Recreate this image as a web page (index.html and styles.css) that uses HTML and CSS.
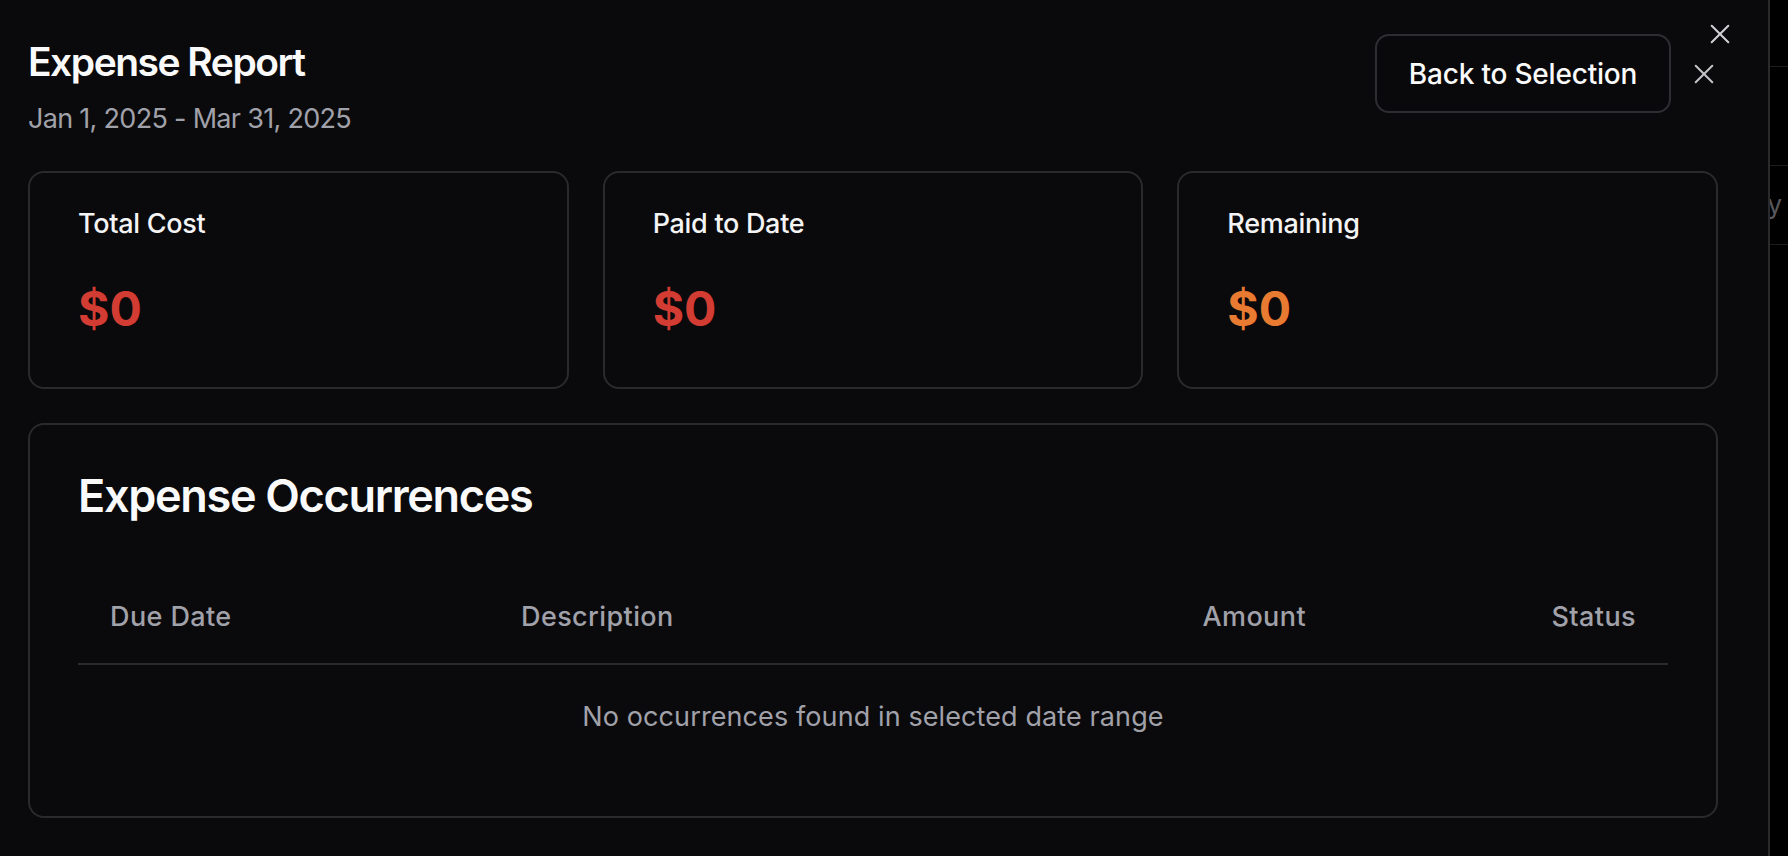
FILE: index.html
```html
<!DOCTYPE html>
<html lang="en">
<head>
<meta charset="utf-8">
<title>Expense Report</title>
<link rel="stylesheet" href="styles.css">
</head>
<body>
<div class="screen">
  <div class="modal">
    <button class="dialog-close" aria-label="Close dialog">
      <svg width="20" height="20" viewBox="0 0 20 20"><path d="M1.7 1.7 L18.3 18.3 M18.3 1.7 L1.7 18.3" fill="none" stroke="currentColor" stroke-width="2" stroke-linecap="round"/></svg>
    </button>
    <header class="modal-header">
      <div class="title-block">
        <h1 class="title">Expense Report</h1>
        <p class="subtitle">Jan 1, 2025 - Mar 31, 2025</p>
      </div>
      <div class="header-actions">
        <button class="btn-outline">Back to Selection</button>
        <button class="icon-btn" aria-label="Close">
          <svg width="20" height="20" viewBox="0 0 20 20"><path d="M1.7 1.7 L18.3 18.3 M18.3 1.7 L1.7 18.3" fill="none" stroke="currentColor" stroke-width="2" stroke-linecap="round"/></svg>
        </button>
      </div>
    </header>

    <section class="stats">
      <div class="stat-card">
        <p class="stat-label">Total Cost</p>
        <p class="stat-value red">$0</p>
      </div>
      <div class="stat-card">
        <p class="stat-label">Paid to Date</p>
        <p class="stat-value red">$0</p>
      </div>
      <div class="stat-card">
        <p class="stat-label">Remaining</p>
        <p class="stat-value orange">$0</p>
      </div>
    </section>

    <section class="occ-card">
      <h2 class="occ-title">Expense Occurrences</h2>
      <div class="table">
        <div class="thead">
          <div class="th">Due Date</div>
          <div class="th">Description</div>
          <div class="th right">Amount</div>
          <div class="th right">Status</div>
        </div>
        <div class="empty">No occurrences found in selected date range</div>
      </div>
    </section>
  </div>

  <div class="behind">
    <div class="behind-row r1"></div>
    <div class="behind-row r2"></div>
    <div class="behind-row r3"><span>Category</span></div>
    <div class="behind-row r4"></div>
  </div>
</div>
</body>
</html>
```

FILE: styles.css
```css
html, body {
  margin: 0;
  padding: 0;
  background: #000;
}

body {
  font-family: Inter, "Noto Sans", sans-serif;
  color: #fafafa;
}

.screen {
  display: flex;
  height: 856px;
  overflow: hidden;
}

.modal {
  position: relative;
  flex: none;
  width: 1770px;
  box-sizing: border-box;
  background: #0a0a0c;
  border-right: 2px solid #2a2a2d;
  padding: 34px 50px 0 28px;
}

.dialog-close {
  position: absolute;
  top: 24px;
  right: 38px;
  width: 20px;
  height: 20px;
  padding: 0;
  border: 0;
  background: none;
  color: #d2d2d6;
  display: flex;
}

.modal-header {
  display: flex;
  justify-content: space-between;
  align-items: flex-start;
}

.title {
  margin: 4px 0 0;
  font-size: 39px;
  line-height: 48px;
  font-weight: 600;
  letter-spacing: -1.5px;
  color: #fafafa;
}

.subtitle {
  margin: 13px 0 0;
  font-size: 27px;
  line-height: 40px;
  letter-spacing: -0.7px;
  color: #a1a1aa;
}

.header-actions {
  display: flex;
  align-items: center;
  gap: 19px;
}

.btn-outline {
  width: 296px;
  height: 79px;
  box-sizing: border-box;
  border: 2px solid #2e2e32;
  border-radius: 14px;
  background: #09090b;
  color: #fafafa;
  font-family: Inter, "Noto Sans", sans-serif;
  font-size: 28px;
  font-weight: 500;
  letter-spacing: -0.2px;
  padding: 0;
}

.icon-btn {
  width: 28px;
  height: 28px;
  padding: 0;
  border: 0;
  background: none;
  color: #c4c4c8;
  display: flex;
  align-items: center;
  justify-content: center;
}

.stats {
  display: grid;
  grid-template-columns: repeat(3, 1fr);
  gap: 34px;
  margin-top: 32px;
}

.stat-card {
  height: 218px;
  box-sizing: border-box;
  border: 2px solid #2a2a2d;
  border-radius: 16px;
  padding: 31px 48px 30px;
}

.stat-label {
  margin: 0;
  font-size: 27px;
  line-height: 40px;
  font-weight: 500;
  letter-spacing: -0.3px;
  color: #f4f4f5;
}

.stat-value {
  margin: 37px 0 0;
  font-size: 48px;
  line-height: 56px;
  font-weight: 700;
}

.red { color: #d23c32; }
.orange { color: #e97a31; }

.occ-card {
  margin-top: 34px;
  height: 395px;
  box-sizing: border-box;
  border: 2px solid #2a2a2d;
  border-radius: 16px;
  padding: 43px 48px 47px;
}

.occ-title {
  margin: 0;
  font-size: 45px;
  line-height: 56px;
  font-weight: 600;
  letter-spacing: -1.3px;
  color: #fafafa;
}

.table {
  margin-top: 44px;
}

.thead {
  display: grid;
  grid-template-columns: 411px 1fr 240px 330px;
  align-items: center;
  height: 97px;
  box-sizing: border-box;
  border-bottom: 2px solid #2a2a2d;
  padding-top: 2px;
}

.th {
  padding: 0 32px;
  font-size: 27px;
  line-height: 36px;
  font-weight: 500;
  letter-spacing: 0.4px;
  color: #a1a1aa;
}

.th.right {
  text-align: right;
}

.empty {
  height: 104px;
  display: flex;
  align-items: center;
  justify-content: center;
  font-size: 27px;
  line-height: 36px;
  letter-spacing: 0.1px;
  color: #a1a1aa;
}

.behind {
  flex: 1;
  overflow: hidden;
  background: #000;
}

.behind-row {
  box-sizing: border-box;
  border-bottom: 1px solid #1c1c1e;
  display: flex;
  justify-content: flex-end;
  align-items: center;
  padding-right: 6px;
}

.r1 { height: 67px; }
.r2 { height: 99px; }
.r3 { height: 79px; }
.r4 { height: 611px; border-bottom: 0; }

.r3 span {
  flex: none;
  font-size: 26px;
  line-height: 36px;
  color: #58585c;
  white-space: nowrap;
}
```
